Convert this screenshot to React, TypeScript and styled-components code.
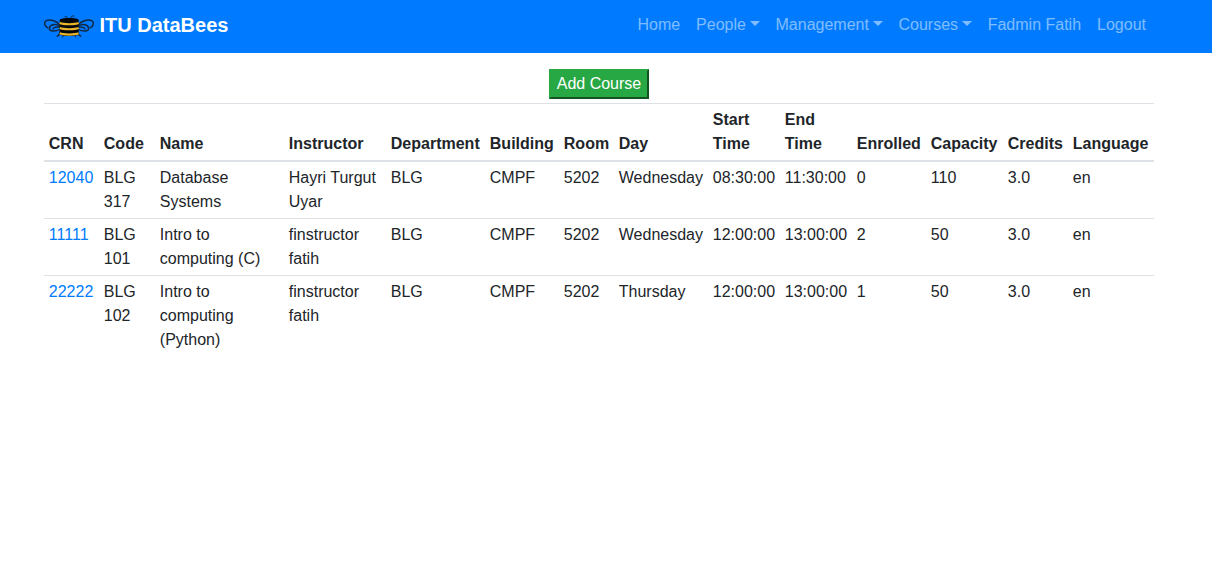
import React from "react";
import styled, { createGlobalStyle } from "styled-components";

const GlobalStyle = createGlobalStyle`
  *, *::before, *::after { box-sizing: border-box; }
  body {
    margin: 0;
    background: #fff;
    color: #212529;
    font-family: "Liberation Sans", Arial, sans-serif;
    font-size: 16px;
    line-height: 1.5;
  }
`;

const Navbar = styled.nav`
  height: 53px;
  background: #007bff;
`;

const Container = styled.div`
  width: 1110px;
  margin-left: 44px;
`;

const NavInner = styled(Container)`
  height: 100%;
  display: flex;
  align-items: center;
  justify-content: space-between;
`;

const Brand = styled.a`
  display: flex;
  align-items: center;
  gap: 5.5px;
  padding-bottom: 4px;
  color: #fff;
  font-size: 20px;
  font-weight: 700;
  line-height: 30px;
  text-decoration: none;
`;

const BeeLogo = styled.svg`
  display: block;
  width: 50px;
  height: 25px;
  margin-top: 4px;
`;

const NavList = styled.ul`
  display: flex;
  margin: 0;
  padding: 0 0 4px;
  list-style: none;
`;

const NavLink = styled.a<{ $menu?: boolean }>`
  display: block;
  padding: 8px;
  color: rgba(255, 255, 255, 0.5);
  text-decoration: none;
  white-space: nowrap;

  ${(p) =>
    p.$menu &&
    `&::after {
      content: "";
      display: inline-block;
      margin-left: 3.6px;
      vertical-align: 3.8px;
      border-top: 5px solid;
      border-right: 5px solid transparent;
      border-left: 5px solid transparent;
    }`}
`;

const Main = styled(Container)`
  padding-top: 16px;
`;

const Actions = styled.div`
  display: flex;
  justify-content: center;
  margin-bottom: 4px;
`;

const AddButton = styled.button`
  padding: 1px 6px;
  border: 2px outset #28a745;
  background: #28a745;
  color: #fff;
  font: inherit;
`;

const Table = styled.table`
  width: 100%;
  table-layout: fixed;
  border-collapse: separate;
  border-spacing: 0;
`;

const HeadCell = styled.th<{ $width: number }>`
  width: ${(p) => p.$width}px;
  padding: 4px 4.8px;
  border-top: 1px solid #dee2e6;
  border-bottom: 2px solid #dee2e6;
  font-weight: 700;
  text-align: left;
  vertical-align: bottom;
`;

const Cell = styled.td`
  padding: 4px 4.8px;
  vertical-align: top;

  tr + tr > & {
    border-top: 1px solid #dee2e6;
  }
`;

const CourseLink = styled.a`
  color: #007bff;
  text-decoration: none;
`;

const navItems = [
  { label: "Home" },
  { label: "People", menu: true },
  { label: "Management", menu: true },
  { label: "Courses", menu: true },
  { label: "Fadmin Fatih" },
  { label: "Logout" },
];

const columns: [string, number][] = [
  ["CRN", 55],
  ["Code", 56],
  ["Name", 129],
  ["Instructor", 102],
  ["Department", 99],
  ["Building", 74],
  ["Room", 55],
  ["Day", 94],
  ["Start Time", 72],
  ["End Time", 72],
  ["Enrolled", 74],
  ["Capacity", 77],
  ["Credits", 65],
  ["Language", 86],
];

const courses = [
  ["12040", "BLG 317", "Database Systems", "Hayri Turgut Uyar", "BLG", "CMPF", "5202", "Wednesday", "08:30:00", "11:30:00", "0", "110", "3.0", "en"],
  ["11111", "BLG 101", "Intro to computing (C)", "finstructor fatih", "BLG", "CMPF", "5202", "Wednesday", "12:00:00", "13:00:00", "2", "50", "3.0", "en"],
  ["22222", "BLG 102", "Intro to computing (Python)", "finstructor fatih", "BLG", "CMPF", "5202", "Thursday", "12:00:00", "13:00:00", "1", "50", "3.0", "en"],
];

function Bee() {
  return (
    <BeeLogo viewBox="0 0 150 75" aria-hidden="true">
      <g fill="none" stroke="#122842" strokeWidth="4.5" strokeLinecap="round">
        <path d="M48 33C36 20 18 15 7 20C-1 24 1 36 11 41" />
        <path d="M48 36C34 28 17 31 16 43C16 54 36 53 48 45" />
        <path d="M27 44C33 37 40 38 48 40" />
        <path d="M102 33C114 20 132 15 143 20C151 24 149 36 139 41" />
        <path d="M102 36C116 28 133 31 134 43C134 54 114 53 102 45" />
        <path d="M123 44C117 37 110 38 102 40" />
        <path d="M49 52L45 63L40 66M101 52L105 63L110 66" />
        <path d="M71 13C70 8 67 6 63 8M80 13C81 7 85 4 90 6" strokeWidth="3" />
        <path d="M58 65L56 69M93 65L95 69" strokeWidth="3" />
      </g>
      <path d="M47 18C49 10 102 10 104 18V61C102 68 49 68 47 61Z" fill="#05070a" />
      <g fill="none" stroke="#e9b52c" strokeWidth="6.5">
        <path d="M47 27C58 32 93 32 104 27" />
        <path d="M47 42C58 47 93 47 104 42" />
        <path d="M47 58C58 63 93 63 104 58" />
      </g>
    </BeeLogo>
  );
}

export default function App() {
  return (
    <>
      <GlobalStyle />
      <Navbar>
        <NavInner>
          <Brand>
            <Bee />
            ITU DataBees
          </Brand>
          <NavList>
            {navItems.map((item) => (
              <li key={item.label}>
                <NavLink $menu={item.menu}>{item.label}</NavLink>
              </li>
            ))}
          </NavList>
        </NavInner>
      </Navbar>
      <Main as="main">
        <Actions>
          <AddButton type="button">Add Course</AddButton>
        </Actions>
        <Table>
          <thead>
            <tr>
              {columns.map(([name, width]) => (
                <HeadCell key={name} $width={width}>
                  {name}
                </HeadCell>
              ))}
            </tr>
          </thead>
          <tbody>
            {courses.map((course) => (
              <tr key={course[0]}>
                {course.map((value, i) => (
                  <Cell key={i}>{i === 0 ? <CourseLink>{value}</CourseLink> : value}</Cell>
                ))}
              </tr>
            ))}
          </tbody>
        </Table>
      </Main>
    </>
  );
}
